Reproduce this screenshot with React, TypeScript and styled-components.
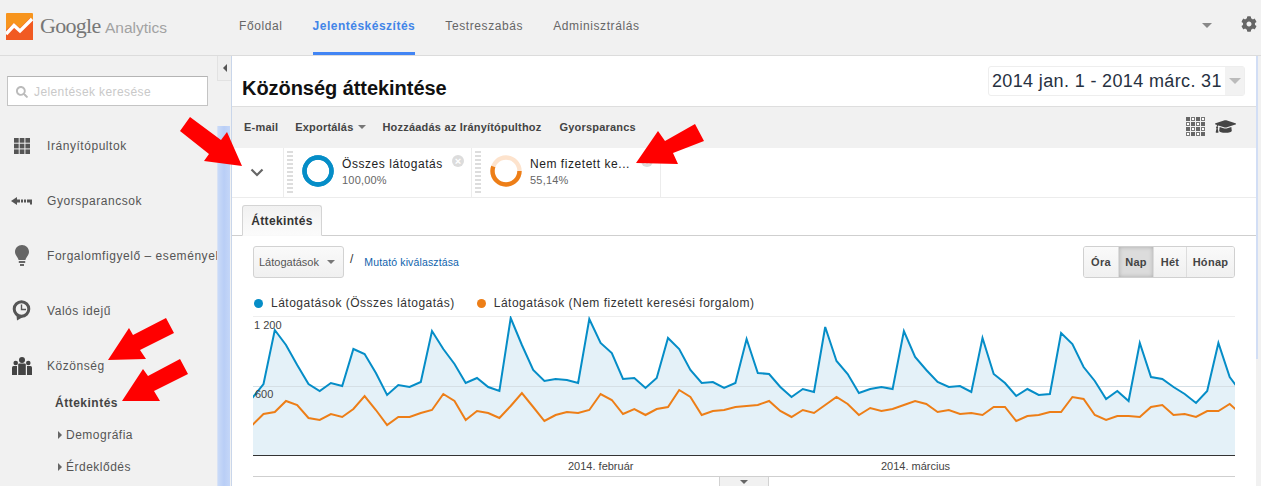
import React from 'react';
import styled, { createGlobalStyle } from 'styled-components';
import { FaCog, FaGraduationCap, FaSearch } from 'react-icons/fa';

const GlobalStyle = createGlobalStyle`
  html, body {
    margin: 0;
    padding: 0;
    width: 1261px;
    height: 486px;
    overflow: hidden;
    background: #f1f1f1;
    font-family: "Liberation Sans", Arial, sans-serif;
  }
`;

const Page = styled.div`
  position: relative;
  width: 1261px;
  height: 486px;
  overflow: hidden;
  display: flex;
  flex-direction: column;
`;

const Header = styled.header`
  height: 55px;
  flex: none;
  display: flex;
  align-items: stretch;
  padding-left: 6px;
  background: #f1f1f1;
  border-bottom: 1px solid #dcdcdc;
`;

const Brand = styled.div`
  width: 233px;
  display: flex;
  align-items: center;
  margin-top: -3px;
  gap: 7px;
  white-space: nowrap;
`;

const BrandGoogle = styled.span`
  font-family: "Liberation Serif", serif;
  font-size: 22px;
  color: #777;
  letter-spacing: -0.7px;
`;

const BrandName = styled.span`
  font-size: 15.5px;
  font-weight: 400;
  color: #a2a2a2;
`;

const Nav = styled.nav`
  display: flex;
  gap: 30px;
`;

const NavLink = styled.a<{ $active?: boolean }>`
  display: flex;
  align-items: center;
  height: 52px;
  font-size: 12px;
  letter-spacing: ${p => (p.$active ? '0.5px' : '0.6px')};
  color: ${p => (p.$active ? '#4285e8' : '#666')};
  font-weight: ${p => (p.$active ? 700 : 400)};
  border-bottom: 3px solid ${p => (p.$active ? '#4285f4' : 'transparent')};
`;

const HeaderRight = styled.div`
  margin-left: auto;
  display: flex;
  align-items: center;
  gap: 29px;
  padding-right: 4px;
  padding-bottom: 4px;
  color: #666;
  font-size: 16px;
`;

const Gear = styled(FaCog)`
  margin-top: -4px;
`;

const Caret = styled.span<{ $color?: string; $size?: number }>`
  display: inline-block;
  width: 0;
  height: 0;
  border-left: ${p => p.$size ?? 4}px solid transparent;
  border-right: ${p => p.$size ?? 4}px solid transparent;
  border-top: ${p => p.$size ?? 4}px solid ${p => p.$color ?? '#777'};
`;

const Body = styled.div`
  flex: 1;
  min-height: 0;
  display: flex;
`;

const Sidebar = styled.aside`
  width: 217px;
  flex: none;
  overflow: hidden;
  padding: 20px 0 0 7px;
  box-sizing: border-box;
`;

const SearchBox = styled.div`
  width: 201px;
  height: 30px;
  box-sizing: border-box;
  display: flex;
  align-items: center;
  gap: 6px;
  padding: 2px 0 0 8px;
  margin-bottom: 12px;
  background: #fff;
  border: 1px solid #c4c4c4;
  border-top-color: #b4b4b4;
  color: #c9c9c9;
  font-size: 12px;
  letter-spacing: 0.4px;
  white-space: nowrap;
`;

const SideItem = styled.div`
  height: 55px;
  margin-left: -7px;
  display: flex;
  align-items: center;
  white-space: nowrap;
  font-size: 12px;
  letter-spacing: 0.55px;
  color: #555;
`;

const SideIcon = styled.span`
  width: 47px;
  flex: none;
  display: flex;
  justify-content: center;
  padding-right: 4px;
  box-sizing: border-box;
  color: #444;
`;

const SubActive = styled.div`
  height: 32px;
  margin: -6px 0 0 48px;
  display: flex;
  align-items: center;
  font-size: 12px;
  font-weight: 700;
  letter-spacing: 0.5px;
  color: #444;
`;

const SubItem = styled.div`
  height: 32px;
  margin-left: 51px;
  display: flex;
  align-items: center;
  gap: 4px;
  font-size: 12px;
  letter-spacing: 0.5px;
  color: #555;
`;

const SubArrow = styled.span`
  width: 0;
  height: 0;
  border-top: 4px solid transparent;
  border-bottom: 4px solid transparent;
  border-left: 4px solid #666;
`;

const Gutter = styled.div`
  width: 14px;
  flex: none;
  display: flex;
  flex-direction: column;
`;

const CollapseBtn = styled.div`
  height: 25px;
  box-sizing: border-box;
  display: flex;
  align-items: center;
  justify-content: center;
  background: #efefef;
  border: 1px solid #e2e2e2;
  border-top: 0;
  border-right: 0;
`;

const CollapseArrow = styled.span`
  width: 0;
  height: 0;
  border-top: 4px solid transparent;
  border-bottom: 4px solid transparent;
  border-right: 4px solid #555;
`;

const Thumb = styled.div`
  margin-top: 45px;
  flex: 1;
  width: 13px;
  background: linear-gradient(90deg, #c9daf8, #b9cef6 50%, #c4d6f8);
  border-left: 1px solid #d8e2f5;
  box-sizing: border-box;
`;

const Main = styled.main`
  width: 1025px;
  flex: none;
  background: #fff;
  border-left: 1px solid #c9d6ea;
  box-sizing: border-box;
  overflow: hidden;
`;

const TitleRow = styled.div`
  height: 51px;
  box-sizing: border-box;
  display: flex;
  align-items: flex-start;
  justify-content: space-between;
  padding: 10px 11px 0 10px;
  border-bottom: 1px solid #dedede;
`;

const Title = styled.h1`
  margin: 10px 0 0;
  font-size: 20px;
  line-height: 24px;
  font-weight: 700;
  color: #111;
  letter-spacing: -0.05px;
`;

const DateBox = styled.div`
  width: 257px;
  height: 30px;
  box-sizing: border-box;
  display: flex;
  align-items: center;
  justify-content: space-between;
  padding-left: 3px;
  border: 1px solid #eee;
  border-radius: 3px;
  font-size: 18px;
  letter-spacing: 0.36px;
  color: #27313f;
  white-space: nowrap;
`;

const DateCaret = styled.span`
  width: 19px;
  height: 28px;
  display: flex;
  align-items: center;
  justify-content: center;
  background: #f2f2f2;
`;

const Toolbar = styled.div`
  height: 41px;
  box-sizing: border-box;
  display: flex;
  align-items: center;
  padding: 0 20px 2px 12px;
  background: #f1f1f1;
  font-size: 11px;
  font-weight: 700;
  letter-spacing: 0.2px;
  color: #444;
`;

const ToolItem = styled.span<{ $gap: number }>`
  display: flex;
  align-items: center;
  gap: 5px;
  margin-right: ${p => p.$gap}px;
`;

const ToolIcons = styled.div`
  margin-left: auto;
  display: flex;
  align-items: center;
  gap: 10px;
  color: #444;
  font-size: 21px;
`;

const Segments = styled.div`
  height: 50px;
  box-sizing: border-box;
  display: flex;
  border-bottom: 1px solid #ececec;
`;

const ChevronCell = styled.div`
  width: 52px;
  box-sizing: border-box;
  display: flex;
  align-items: center;
  justify-content: center;
  padding-right: 1px;
  border-right: 1px solid #ececec;
`;

const SegmentCell = styled.div<{ $width: number }>`
  position: relative;
  width: ${p => p.$width}px;
  box-sizing: border-box;
  display: flex;
  align-items: center;
  padding: 0 0 3px 3px;
  border-right: 1px solid #ececec;
`;

const DragDots = styled.span`
  width: 6px;
  height: 44px;
  margin-right: 9px;
  margin-top: 3px;
  background: repeating-linear-gradient(180deg, #ddd 0 2px, #fff 2px 4px);
`;

const SegmentText = styled.div`
  margin-left: 8px;
  display: flex;
  flex-direction: column;
  gap: 2px;
`;

const SegmentName = styled.div`
  font-size: 12px;
  line-height: 15px;
  padding-top: 1px;
  letter-spacing: 0.55px;
  color: #222;
  white-space: nowrap;
`;

const SegmentPct = styled.div`
  font-size: 11px;
  line-height: 13px;
  letter-spacing: 0.2px;
  color: #666;
`;

const CloseDot = styled.span`
  position: absolute;
  top: 7px;
  right: 7px;
  width: 12px;
  height: 12px;
  border-radius: 50%;
  background: #dcdcdc;
  color: #fff;
  font-size: 11px;
  line-height: 12px;
  font-weight: 700;
  text-align: center;
`;

const TabRow = styled.div`
  height: 38px;
  box-sizing: border-box;
  display: flex;
  align-items: flex-end;
  padding-left: 10px;
  border-bottom: 1px solid #cfcfcf;
`;

const Tab = styled.div`
  width: 80px;
  height: 31px;
  margin-bottom: -1px;
  box-sizing: border-box;
  display: flex;
  align-items: center;
  justify-content: center;
  background: linear-gradient(#f1f1f1, #fbfbfb);
  border: 1px solid #d4d4d4;
  border-bottom-color: #f9f9f9;
  border-radius: 3px 3px 0 0;
  font-size: 12px;
  font-weight: 700;
  letter-spacing: 0.35px;
  color: #333;
`;

const Panel = styled.div`
  padding: 10px 21px 0 21px;
`;

const Controls = styled.div`
  display: flex;
  align-items: flex-start;
  justify-content: space-between;
`;

const MetricPick = styled.div`
  display: flex;
  align-items: center;
`;

const Select = styled.div`
  width: 91px;
  height: 32px;
  box-sizing: border-box;
  display: flex;
  align-items: center;
  justify-content: space-between;
  padding: 0 8px 0 5px;
  background: linear-gradient(#fafafa, #f0f0f0);
  border: 1px solid #d2d2d2;
  border-radius: 3px;
  font-size: 11px;
  color: #555;
`;

const Slash = styled.span`
  margin: -6px 0 0 6px;
  font-size: 12px;
  color: #333;
`;

const MetricLink = styled.a`
  margin-left: 11px;
  font-size: 10.5px;
  letter-spacing: 0.13px;
  color: #0f63ad;
`;

const ButtonGroup = styled.div`
  display: flex;
  height: 32px;
  box-sizing: border-box;
  border: 1px solid #d0d0d0;
  border-radius: 3px;
  overflow: hidden;
`;

const RangeButton = styled.div<{ $active?: boolean; $width: number }>`
  width: ${p => p.$width}px;
  display: flex;
  align-items: center;
  justify-content: center;
  box-sizing: border-box;
  font-size: 11px;
  font-weight: 700;
  letter-spacing: 0.3px;
  color: #444;
  background: ${p => (p.$active ? '#dcdcdc' : 'linear-gradient(#fafafa, #f0f0f0)')};
  box-shadow: ${p => (p.$active ? 'inset 0 0 4px #aaa' : 'none')};
  & + & {
    border-left: 1px solid #ddd;
  }
`;

const Legend = styled.div`
  display: flex;
  gap: 21px;
  margin-top: 15px;
  height: 20px;
  align-items: center;
`;

const LegendItem = styled.div`
  display: flex;
  align-items: center;
  gap: 8px;
  margin-left: 1px;
  font-size: 12px;
  letter-spacing: 0.5px;
  color: #333;
`;

const LegendDot = styled.span<{ $color: string }>`
  width: 9px;
  height: 9px;
  border-radius: 50%;
  background: ${p => p.$color};
`;

const ChartWrap = styled.div`
  width: 982px;
  margin-top: 3px;
`;

const ChartSvg = styled.svg`
  display: block;
  width: 982px;
  height: 160px;
  font-family: "Liberation Sans", Arial, sans-serif;
`;

const ChartFoot = styled.div`
  display: flex;
  justify-content: center;
  border-top: 1px solid #cfcfcf;
`;

const FootHandle = styled.div`
  width: 50px;
  height: 10px;
  box-sizing: border-box;
  display: flex;
  align-items: center;
  justify-content: center;
  background: #f1f1f1;
  border: 1px solid #d2d2d2;
  border-top: 0;
`;

const RightRail = styled.div`
  flex: 1;
  display: flex;
  flex-direction: column;
`;

const RailLine = styled.div`
  height: 303px;
  width: 2px;
  background: #d2def5;
`;

const Arrows = styled.svg`
  position: absolute;
  left: 0;
  top: 0;
  pointer-events: none;
`;

const visits = [
  398, 384, 330, 345, 365, 384, 391, 383, 386, 349, 354, 373, 395, 385, 387, 382, 331, 349, 364, 383, 378, 387, 391,
  318, 345, 370, 381, 379, 380, 383, 319, 343, 353, 379, 378, 388, 378, 338, 349, 370, 383, 382, 388, 383, 339, 373,
  374, 387, 397, 389, 392, 327, 361, 374, 393, 389, 387, 389, 331, 357, 370, 382, 387, 386, 392, 338, 374, 383, 396,
  389, 395, 394, 333, 344, 367, 381, 399, 391, 401, 343, 377, 379, 387, 394, 403, 391, 343, 377, 392,
];

const organic = [
  425, 414, 412, 401, 405, 418, 420, 414, 417, 409, 396, 410, 425, 417, 417, 413, 410, 394, 401, 420, 411, 413, 418,
  406, 393, 407, 421, 415, 412, 413, 410, 394, 400, 414, 409, 415, 409, 407, 390, 397, 415, 411, 410, 407, 406, 405,
  401, 411, 417, 410, 413, 405, 397, 404, 415, 408, 411, 409, 405, 401, 404, 412, 410, 414, 413, 415, 407, 407, 421,
  416, 415, 412, 412, 397, 399, 415, 420, 416, 416, 417, 407, 405, 415, 414, 417, 411, 411, 404, 414,
];

const TOP = 316;
const STEP = 11.234;
const toPoints = (values: number[]) => values.map((v, i) => `${(i * STEP - 0.7).toFixed(1)},${v - TOP}`).join(' ');

const Donut = ({ color, track, part }: { color: string; track: string; part: number }) => {
  const c = 2 * Math.PI * 13.5;
  return (
    <svg width="32" height="32" viewBox="0 0 32 32">
      <circle cx="16" cy="16" r="13.5" fill="none" stroke={track} strokeWidth="4.4" />
      <circle cx="16" cy="16" r="13.5" fill="none" stroke={color} strokeWidth="4.4" strokeDasharray={`${c * part} ${c}`} />
    </svg>
  );
};

const GridIcon = () => (
  <svg width="16" height="16" viewBox="0 0 16 16" fill="#555">
    {[0, 5.7, 11.4].map(x => [0, 5.7, 11.4].map(y => <rect key={`${x}-${y}`} x={x} y={y} width="4.7" height="4.7" />))}
  </svg>
);

const ShortcutIcon = () => (
  <svg width="22" height="10" viewBox="0 0 22 10" fill="#555">
    <path d="M0 5 L6 1 V3.5 H9 V6.5 H6 V9 Z" />
    <rect x="10" y="3.5" width="2" height="3" />
    <rect x="13" y="3.5" width="2" height="3" />
    <path d="M16 3.5 H21 V8.5 H19 V6.5 H16 Z" />
  </svg>
);

const BulbIcon = () => (
  <svg width="14" height="22" viewBox="0 0 14 22" fill="#666">
    <path d="M7 0 C11 0 14 3 14 6.8 C14 10.5 11 12 10.4 15 H3.6 C3 12 0 10.5 0 6.8 C0 3 3 0 7 0 Z" />
    <rect x="3.8" y="16" width="6.4" height="2" />
    <rect x="5" y="19" width="4" height="2" />
  </svg>
);

const ClockIcon = () => (
  <svg width="19" height="21" viewBox="0 0 19 21">
    <path d="M4.5 15 L5 20.5 L11 17 Z" fill="#555" />
    <circle cx="9.5" cy="9" r="7.3" fill="#f1f1f1" stroke="#555" strokeWidth="3" />
    <path d="M9.5 4.5 V9.5 H14" fill="none" stroke="#555" strokeWidth="1.4" />
  </svg>
);

const PeopleIcon = () => (
  <svg width="20" height="18" viewBox="0 0 20 18" fill="#444">
    <circle cx="10" cy="3" r="3" />
    <circle cx="3.7" cy="6" r="2.3" />
    <circle cx="16.3" cy="6" r="2.3" />
    <path d="M6.2 7.5 Q6.2 6.6 7.2 6.6 H12.8 Q13.8 6.6 13.8 7.5 V18 H6.2 Z" />
    <path d="M0 10.5 Q0 9 1.5 9 H5 V18 H0 Z" />
    <path d="M15 9 H18.5 Q20 9 20 10.5 V18 H15 Z" />
  </svg>
);

const ChevronIcon = () => (
  <svg width="14" height="9" viewBox="0 0 14 9">
    <path d="M1.5 1.5 L7 7 L12.5 1.5" fill="none" stroke="#666" strokeWidth="2.2" />
  </svg>
);

const TableIcon = () => (
  <svg width="19" height="19" viewBox="0 0 19 19">
    {[0, 5, 10, 15].map(x =>
      [0, 5, 10, 15].map(y =>
        (x + y) % 10 === 0 ? (
          <rect key={`${x}-${y}`} x={x} y={y} width="4" height="4" fill="#666" />
        ) : (
          <rect key={`${x}-${y}`} x={x + 0.5} y={y + 0.5} width="3" height="3" fill="#fff" stroke="#777" />
        ),
      ),
    )}
  </svg>
);

const Logo = () => (
  <svg width="27" height="27" viewBox="0 0 27 27">
    <rect width="27" height="27" rx="1" fill="#f7941d" />
    <path d="M0 27 V17 L8 10 L14 15 L24 5 L27 7 V27 Z" fill="#f15a22" />
    <path d="M0 21 L8 12.5 L14 18 L26 6" fill="none" stroke="#fff" strokeWidth="3.4" />
  </svg>
);

const App: React.FC = () => (
  <Page>
    <GlobalStyle />
    <Header>
      <Brand>
        <Logo />
        <span>
          <BrandGoogle>Google</BrandGoogle> <BrandName>Analytics</BrandName>
        </span>
      </Brand>
      <Nav>
        <NavLink>Főoldal</NavLink>
        <NavLink $active>Jelentéskészítés</NavLink>
        <NavLink>Testreszabás</NavLink>
        <NavLink>Adminisztrálás</NavLink>
      </Nav>
      <HeaderRight>
        <Caret $size={5} $color="#888" />
        <Gear />
      </HeaderRight>
    </Header>
    <Body>
      <Sidebar>
        <SearchBox>
          <FaSearch size={12} color="#bbb" />
          Jelentések keresése
        </SearchBox>
        <SideItem>
          <SideIcon>
            <GridIcon />
          </SideIcon>
          Irányítópultok
        </SideItem>
        <SideItem>
          <SideIcon>
            <ShortcutIcon />
          </SideIcon>
          Gyorsparancsok
        </SideItem>
        <SideItem>
          <SideIcon>
            <BulbIcon />
          </SideIcon>
          Forgalomfigyelő – események
        </SideItem>
        <SideItem>
          <SideIcon>
            <ClockIcon />
          </SideIcon>
          Valós idejű
        </SideItem>
        <SideItem>
          <SideIcon>
            <PeopleIcon />
          </SideIcon>
          Közönség
        </SideItem>
        <SubActive>Áttekintés</SubActive>
        <SubItem>
          <SubArrow />
          Demográfia
        </SubItem>
        <SubItem>
          <SubArrow />
          Érdeklődés
        </SubItem>
      </Sidebar>
      <Gutter>
        <CollapseBtn>
          <CollapseArrow />
        </CollapseBtn>
        <Thumb />
      </Gutter>
      <Main>
        <TitleRow>
          <Title>Közönség áttekintése</Title>
          <DateBox>
            2014 jan. 1 - 2014 márc. 31
            <DateCaret>
              <Caret $size={6} $color="#bbb" />
            </DateCaret>
          </DateBox>
        </TitleRow>
        <Toolbar>
          <ToolItem $gap={17}>E-mail</ToolItem>
          <ToolItem $gap={16}>
            Exportálás <Caret $color="#777" />
          </ToolItem>
          <ToolItem $gap={18}>Hozzáadás az Irányítópulthoz</ToolItem>
          <ToolItem $gap={0}>Gyorsparancs</ToolItem>
          <ToolIcons>
            <TableIcon />
            <FaGraduationCap />
          </ToolIcons>
        </Toolbar>
        <Segments>
          <ChevronCell>
            <ChevronIcon />
          </ChevronCell>
          <SegmentCell $width={188}>
            <DragDots />
            <Donut color="#058dc7" track="#058dc7" part={1} />
            <SegmentText>
              <SegmentName>Összes látogatás</SegmentName>
              <SegmentPct>100,00%</SegmentPct>
            </SegmentText>
            <CloseDot>×</CloseDot>
          </SegmentCell>
          <SegmentCell $width={189}>
            <DragDots />
            <Donut color="#ed7e17" track="#fde3cd" part={0.5514} />
            <SegmentText>
              <SegmentName>Nem fizetett ke...</SegmentName>
              <SegmentPct>55,14%</SegmentPct>
            </SegmentText>
            <CloseDot>×</CloseDot>
          </SegmentCell>
        </Segments>
        <TabRow>
          <Tab>Áttekintés</Tab>
        </TabRow>
        <Panel>
          <Controls>
            <MetricPick>
              <Select>
                Látogatások
                <Caret />
              </Select>
              <Slash>/</Slash>
              <MetricLink>Mutató kiválasztása</MetricLink>
            </MetricPick>
            <ButtonGroup>
              <RangeButton $width={34}>Óra</RangeButton>
              <RangeButton $width={35} $active>
                Nap
              </RangeButton>
              <RangeButton $width={33}>Hét</RangeButton>
              <RangeButton $width={48}>Hónap</RangeButton>
            </ButtonGroup>
          </Controls>
          <Legend>
            <LegendItem>
              <LegendDot $color="#058dc7" />
              Látogatások (Összes látogatás)
            </LegendItem>
            <LegendItem>
              <LegendDot $color="#ed7e17" />
              Látogatások (Nem fizetett keresési forgalom)
            </LegendItem>
          </Legend>
          <ChartWrap>
            <ChartSvg viewBox="0 0 982 160">
              <line x1="0" x2="982" y1="0.5" y2="0.5" stroke="#eee" />
              <polygon points={`0,140 ${toPoints(visits)} 1000,140`} fill="#e4f1f8" />
              <line x1="0" x2="982" y1="70.5" y2="70.5" stroke="#d5dfe5" />
              <polyline points={toPoints(visits)} fill="none" stroke="#058dc7" strokeWidth="2" />
              <polyline points={toPoints(organic)} fill="none" stroke="#ed7e17" strokeWidth="2" />
              <line x1="0" x2="982" y1="139.5" y2="139.5" stroke="#333" />
              <text x="1" y="13" fontSize="11" fill="#444">
                1 200
              </text>
              <text x="2" y="82" fontSize="11" fill="#444">
                600
              </text>
              <text x="315" y="154" fontSize="11" fill="#444">
                2014. február
              </text>
              <text x="628" y="154" fontSize="11" fill="#444">
                2014. március
              </text>
            </ChartSvg>
            <ChartFoot>
              <FootHandle>
                <Caret $size={4} $color="#666" />
              </FootHandle>
            </ChartFoot>
          </ChartWrap>
        </Panel>
      </Main>
      <RightRail>
        <RailLine />
      </RightRail>
    </Body>
    <Arrows width="1261" height="486" viewBox="0 0 1261 486" fill="#ff0000">
      <polygon points="190,117 180,131 209,154 204,161 242,166 227,132 221,140" />
      <polygon points="636,163 658,131 665,141 695,124 704,141 673,153 678,164" />
      <polygon points="108,360 129,328 133,335 166,318 174,333 140,350 146,359" />
      <polygon points="122,401 143,369 148,376 180,359 188,374 154,391 160,401" />
    </Arrows>
  </Page>
);

export default App;
